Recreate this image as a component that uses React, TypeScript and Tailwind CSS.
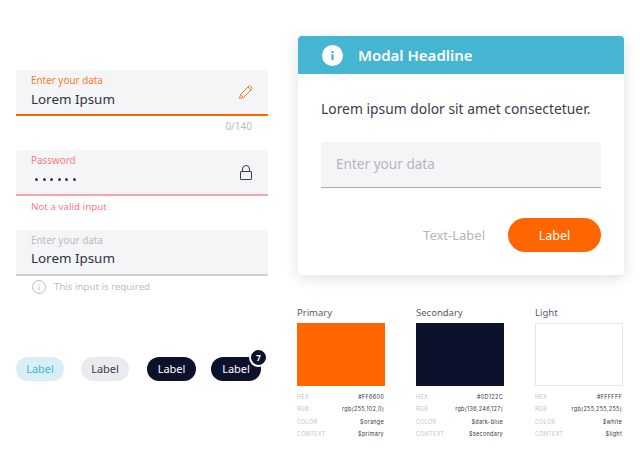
import React from "react";

const font = { fontFamily: '"Noto Sans", "Open Sans", sans-serif' };

function Field({ label, labelClass, value, line, icon }: { label: string; labelClass: string; value: React.ReactNode; line: string; icon?: React.ReactNode }) {
  return (
    <div className={`h-[46px] flex items-start justify-between rounded-t-[4px] bg-[#f4f5f7] border-b-2 ${line} pl-[15px] pr-[14px]`}>
      <div className="flex flex-col pt-[3px]">
        <span className={`text-[9.9px] leading-[14px] ${labelClass}`}>{label}</span>
        {value}
      </div>
      {icon}
    </div>
  );
}

function Chip({ cls, badge }: { cls: string; badge?: boolean }) {
  return (
    <div className={`relative h-6 flex items-center justify-center rounded-full text-[11px] pt-[1px] ${cls}`}>
      Label
      {badge && (
        <span className="absolute right-[-7px] top-[-9px] w-[19px] h-[19px] rounded-full bg-[#0d122c] border-2 border-white flex items-center justify-center text-[8px] font-bold text-white">7</span>
      )}
    </div>
  );
}

function Swatch({ title, cls, rows }: { title: string; cls: string; rows: string[] }) {
  const keys = ["HEX", "RGB", "COLOR", "CONTEXT"];
  return (
    <div className="w-[88px]">
      <div className="text-[9.5px] leading-[13px] text-[#555b66] mb-[4px]">{title}</div>
      <div className={`h-[63px] ${cls}`} />
      <div className="mt-[5px]">
        {keys.map((k, i) => (
          <div key={k} className="flex justify-between items-center h-[12.4px] text-[5.5px] pr-[1px]" style={{ fontFamily: "Inter, sans-serif" }}>
            <span className="text-[#c4c5c9] tracking-[0.3px]">{k}</span>
            <span className="text-[#33363f] tracking-[0.3px]">{rows[i]}</span>
          </div>
        ))}
      </div>
    </div>
  );
}

export default function App() {
  return (
    <div className="w-[640px] h-[450px] bg-white flex overflow-hidden text-[#2f3340]" style={font}>
      <div className="w-[252px] ml-4 pt-[70px] shrink-0">
        <Field
          label="Enter your data"
          labelClass="text-[#ff7a26]"
          line="border-[#ff6600]"
          value={<span className="text-[13.4px] leading-[22px] mt-[1px]">Lorem Ipsum</span>}
          icon={
            <svg className="mt-[14px]" width="16" height="16" viewBox="0 0 16 16" fill="none" stroke="#ff7a26" strokeWidth="1" strokeLinejoin="round">
              <path d="M1.5 14.5 L2.5 10.5 L11.5 1.5 L14.5 4.5 L5.5 13.5 Z" />
              <path d="M2.5 10.5 L5.5 13.5 M10 3 L13 6" />
            </svg>
          }
        />
        <div className="h-[34px] pt-[3px] pr-[16px] text-right text-[10px] leading-[14px] text-[#b9bbc0]">0/140</div>
        <Field
          label="Password"
          labelClass="text-[#ff7b80]"
          line="border-[#f9a5a8]"
          value={
            <span className="flex gap-[4.5px] h-[22px] mt-[1px] ml-[4px] items-center">
              {[0, 1, 2, 3, 4, 5].map((i) => (
                <span key={i} className="w-[3px] h-[3px] rounded-full bg-[#3a3d48]" />
              ))}
            </span>
          }
          icon={
            <svg className="mt-[15px] mr-[2px]" width="12" height="15" viewBox="0 0 12 15" fill="none" stroke="#3a3d48" strokeWidth="1">
              <rect x="0.5" y="6.5" width="11" height="8" rx="0.5" />
              <path d="M2.5 6.5 V4 a3.5 3.5 0 0 1 7 0 V6.5" />
            </svg>
          }
        />
        <div className="h-[34px] pt-[4px] pl-[15px] text-[9.8px] leading-[14px] text-[#ff7b80]">Not a valid input</div>
        <Field
          label="Enter your data"
          labelClass="text-[#b9bbc0]"
          line="border-[#cfd0d4]"
          value={<span className="text-[13.4px] leading-[22px]">Lorem Ipsum</span>}
        />
        <div className="flex items-center pl-[16px] gap-[8px] h-[22px] text-[9.7px] text-[#bcbec3]">
          <svg width="14" height="14" viewBox="0 0 14 14" fill="none" stroke="#a9abb0" strokeWidth="0.8">
            <circle cx="7" cy="7" r="6.4" />
            <path d="M7 6.2 V10 M7 4 V5" />
          </svg>
          This input is required
        </div>
        <div className="flex mt-[59px] gap-[17px]">
          <Chip cls="w-12 bg-[#d8f0f5] text-[#46b5d1]" />
          <Chip cls="w-12 bg-[#e9ebee] text-[#3a3d48]" />
          <Chip cls="w-[49px] bg-[#0d122c] text-white ml-[1px]" />
          <Chip cls="w-[50px] bg-[#0d122c] text-white -ml-[2px]" badge />
        </div>
      </div>

      <div className="ml-[29px] w-[327px] shrink-0 pt-9">
        <div className="w-[326px] ml-[1px] h-[239px] rounded-[4px] bg-white overflow-hidden shadow-[0_3px_14px_rgba(60,65,90,0.16)]">
          <div className="h-[38px] bg-[#46b5d1] flex items-center pl-6 gap-[15px]">
            <span className="w-[21px] h-[21px] rounded-full bg-white flex items-center justify-center">
              <svg width="3" height="9" viewBox="0 0 3 9" fill="#46b5d1"><rect x="0.4" y="0" width="2.2" height="2" /><rect x="0.4" y="3.2" width="2.2" height="5.8" /></svg>
            </span>
            <span className="text-[15px] font-semibold text-white">Modal Headline</span>
          </div>
          <div className="px-[23px]">
            <p className="mt-[25px] text-[13.85px] leading-5 text-[#3a3d48]">Lorem ipsum dolor sit amet consectetuer.</p>
            <div className="mt-[23px] h-[46px] rounded-t-[4px] bg-[#f4f5f7] border-b border-[#a9abb0] flex items-center pl-[15px] text-[13.6px] text-[#b4b6bb]">Enter your data</div>
            <div className="mt-[30px] flex items-center justify-end">
              <span className="text-[13px] text-[#b4b6bb] mr-[23px] pt-[2px]">Text-Label</span>
              <span className="w-[93px] h-[34px] rounded-full bg-[#ff6600] flex items-center justify-center text-[12.5px] text-white pt-[3px]">Label</span>
            </div>
          </div>
        </div>
        <div className="flex gap-[31px] mt-[31px]">
          <Swatch title="Primary" cls="bg-[#ff6600]" rows={["#FF6600", "rgb(255,102,0)", "$orange", "$primary"]} />
          <Swatch title="Secondary" cls="bg-[#0d122c]" rows={["#0D122C", "rgb(136,246,127)", "$dark-blue", "$secondary"]} />
          <Swatch title="Light" cls="bg-white border border-[#e4e5e8] rounded-[1px]" rows={["#FFFFFF", "rgb(255,255,255)", "$white", "$light"]} />
        </div>
      </div>
    </div>
  );
}
